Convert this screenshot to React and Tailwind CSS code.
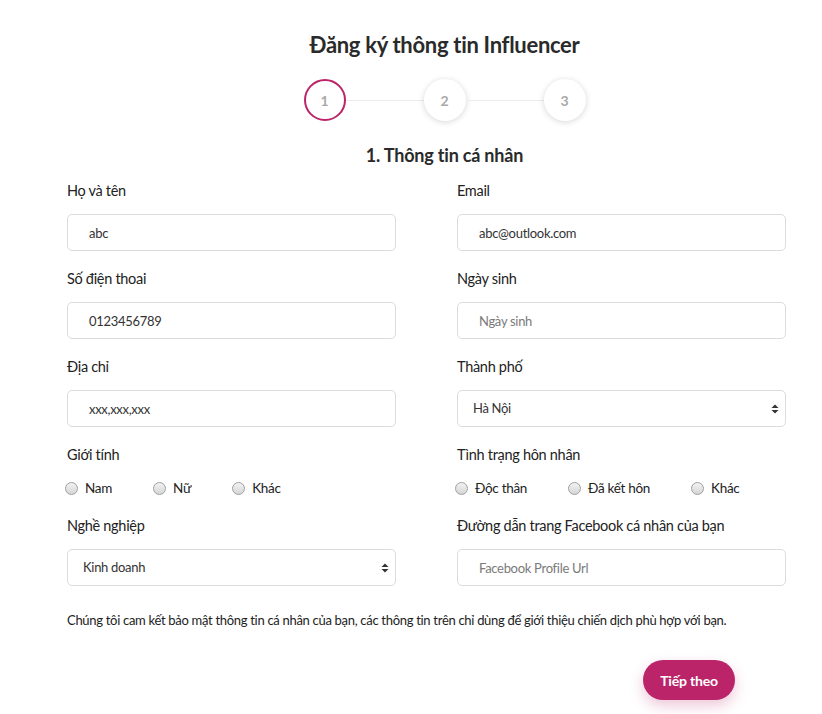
const PINK = '#bb2469'

function Step({ n, active }) {
  return (
    <div
      className={
        active
          ? 'w-[42px] h-[42px] rounded-full border-2 border-[#bb2469] bg-white flex items-center justify-center'
          : 'w-[42px] h-[42px] rounded-full bg-white shadow-[0_1px_6px_rgba(0,0,0,0.16)] flex items-center justify-center'
      }
    >
      <span className="text-[14px] font-bold text-[#a9a9a9]">{n}</span>
    </div>
  )
}

function Field({ label, children }) {
  return (
    <div className="flex flex-col">
      <p className="h-6 leading-6 text-[14.5px] tracking-[-0.3px] text-[#222] whitespace-nowrap">{label}</p>
      <div className="mt-[11px]">{children}</div>
    </div>
  )
}

function TextInput({ value, placeholder }) {
  return (
    <input
      readOnly
      defaultValue={value}
      placeholder={placeholder}
      className="w-full h-[37px] rounded-[5px] border border-[#dcdcdc] bg-white pl-[21px] pr-3 text-[13px] tracking-[-0.3px] text-[#333] placeholder:text-[#7a7a7a] outline-none"
    />
  )
}

function SelectBox({ value }) {
  return (
    <div className="w-full h-[37px] rounded-[5px] border border-[#dcdcdc] bg-white pl-[15px] pr-[6px] flex items-center justify-between">
      <span className="text-[13px] tracking-[-0.3px] text-[#333]">{value}</span>
      <svg width="8" height="10" viewBox="0 0 8 10">
        <path d="M4 0.5 L7.5 4 L0.5 4 Z" fill="#333" />
        <path d="M4 9.5 L7.5 6 L0.5 6 Z" fill="#333" />
      </svg>
    </div>
  )
}

function Radio({ label }) {
  return (
    <div className="flex items-center mr-[41px] shrink-0 whitespace-nowrap">
      <span className="w-[13px] h-[13px] shrink-0 rounded-full border border-[#a0a0a0] bg-gradient-to-b from-[#f2f2f2] to-[#d6d6d6]" />
      <span className="ml-[7px] text-[13.5px] tracking-[-0.3px] text-[#222]">{label}</span>
    </div>
  )
}

function RadioGroup({ items }) {
  return (
    <div className="flex items-center h-5 -ml-[2px]">
      {items.map(i => <Radio key={i} label={i} />)}
    </div>
  )
}

export default function App() {
  return (
    <div className="w-[822px] h-[714px] bg-white overflow-hidden font-['Lato',sans-serif] text-[#222]">
      <div className="pl-[67px] pt-[31px] flex flex-col items-center">
        <h1 className="text-[22px] leading-[28px] font-bold tracking-[-0.3px] text-[#2a2a2a]">Đăng ký thông tin Influencer</h1>
        <div className="mt-[20px] flex items-center">
          <Step n="1" active />
          <div className="w-[78px] h-px bg-[#ececec]" />
          <Step n="2" />
          <div className="w-[78px] h-px bg-[#ececec]" />
          <Step n="3" />
        </div>
        <h2 className="mt-[23px] text-[18px] leading-[22px] font-bold tracking-[-0.2px] text-[#2a2a2a]">1. Thông tin cá nhân</h2>
      </div>

      <div className="ml-[67px] mt-[13px] w-[719px] grid grid-cols-2 gap-x-[61px] gap-y-[16px]">
        <Field label="Họ và tên"><TextInput value="abc" /></Field>
        <Field label="Email"><TextInput value="abc@outlook.com" /></Field>
        <Field label="Số điện thoai"><TextInput value="0123456789" /></Field>
        <Field label="Ngày sinh"><TextInput placeholder="Ngày sinh" /></Field>
        <Field label="Địa chỉ"><TextInput value="xxx,xxx,xxx" /></Field>
        <Field label="Thành phố"><SelectBox value="Hà Nội" /></Field>
        <Field label="Giới tính"><RadioGroup items={['Nam', 'Nữ', 'Khác']} /></Field>
        <Field label="Tình trạng hôn nhân"><RadioGroup items={['Độc thân', 'Đã kết hôn', 'Khác']} /></Field>
        <Field label="Nghề nghiệp"><SelectBox value="Kinh doanh" /></Field>
        <Field label="Đường dẫn trang Facebook cá nhân của bạn"><TextInput placeholder="Facebook Profile Url" /></Field>
      </div>

      <p className="ml-[67px] mt-[25px] text-[13px] leading-[18px] tracking-[-0.3px] text-[#222]">
        Chúng tôi cam kết bảo mật thông tin cá nhân của bạn, các thông tin trên chỉ dùng để giới thiệu chiến dịch phù hợp với bạn.
      </p>

      <div className="mt-[31px] flex justify-end pr-[87px]">
        <button
          className="w-[92px] h-[40px] rounded-full text-white text-[14px] font-bold tracking-[-0.2px] shadow-[0_6px_14px_rgba(187,36,105,0.25)]"
          style={{ background: PINK }}
        >
          Tiếp theo
        </button>
      </div>
    </div>
  )
}
